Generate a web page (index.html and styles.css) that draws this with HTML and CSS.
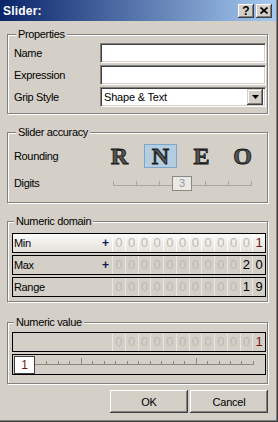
FILE: index.html
```html
<!DOCTYPE html>
<html>
<head>
<meta charset="utf-8">
<link rel="stylesheet" href="styles.css">
</head>
<body>
<div class="window">
  <div class="titlebar">
    <span class="title">Slider:</span>
    <div class="tb-buttons">
      <div class="tb-btn help">?</div>
      <div class="tb-btn close"><svg width="8" height="7" viewBox="0 0 8 7"><path d="M0.5 0.5 L7.5 6.5 M7.5 0.5 L0.5 6.5" stroke="#000" stroke-width="1.7" fill="none"/></svg></div>
    </div>
  </div>
  <div class="content">
    <fieldset class="group g-props">
      <legend>Properties</legend>
      <div class="frow"><span class="lbl">Name</span><div class="input"></div></div>
      <div class="frow"><span class="lbl">Expression</span><div class="input"></div></div>
      <div class="frow"><span class="lbl">Grip Style</span><div class="input combo"><span class="combo-text">Shape &amp; Text</span><span class="combo-btn"><svg width="7" height="4" viewBox="0 0 7 4"><path d="M0 0 H7 L3.5 4 Z" fill="#000"/></svg></span></div></div>
    </fieldset>

    <fieldset class="group g-acc">
      <legend>Slider accuracy</legend>
      <div class="arow">
        <span class="lbl lbl-round">Rounding</span>
        <div class="letters">
          <span class="letter">R</span>
          <span class="letter"><span class="sel">N</span></span>
          <span class="letter">E</span>
          <span class="letter">O</span>
        </div>
      </div>
      <div class="arow drow">
        <span class="lbl lbl-digits">Digits</span>
        <div class="track">
          <div class="ticks"><i></i><i></i><i></i><i></i><i></i><i></i><i></i></div>
          <span class="thumb3">3</span>
        </div>
      </div>
    </fieldset>

    <fieldset class="group g-dom">
      <legend>Numeric domain</legend>
      <div class="nrow active">
        <span class="nlbl">Min</span><span class="sign">+</span>
        <div class="digits"><span>0</span><span>0</span><span>0</span><span>0</span><span>0</span><span>0</span><span>0</span><span>0</span><span>0</span><span>0</span><span>0</span><span class="red">1</span></div>
      </div>
      <div class="nrow">
        <span class="nlbl">Max</span><span class="sign">+</span>
        <div class="digits"><span>0</span><span>0</span><span>0</span><span>0</span><span>0</span><span>0</span><span>0</span><span>0</span><span>0</span><span>0</span><span class="blk">2</span><span class="blk">0</span></div>
      </div>
      <div class="nrow">
        <span class="nlbl">Range</span>
        <div class="digits"><span>0</span><span>0</span><span>0</span><span>0</span><span>0</span><span>0</span><span>0</span><span>0</span><span>0</span><span>0</span><span class="blk">1</span><span class="blk">9</span></div>
      </div>
    </fieldset>

    <fieldset class="group g-val">
      <legend>Numeric value</legend>
      <div class="nrow">
        <span class="nlbl"></span>
        <div class="digits"><span>0</span><span>0</span><span>0</span><span>0</span><span>0</span><span>0</span><span>0</span><span>0</span><span>0</span><span>0</span><span>0</span><span class="red">1</span></div>
      </div>
      <div class="vslider">
        <span class="thumb1">1</span>
        <div class="vticks"><i></i><i></i><i></i><i></i><i class="tall"></i><i></i><i></i><i></i><i></i><i></i><i></i><i></i><i></i><i></i><i class="tall"></i><i></i><i></i><i></i><i></i><i></i></div>
      </div>
    </fieldset>

    <div class="dlg-buttons">
      <div class="btn">OK</div>
      <div class="btn">Cancel</div>
    </div>
  </div>
</div>
</body>
</html>
```

FILE: styles.css
```css
* { box-sizing: border-box; }
html, body { margin: 0; padding: 0; }
body {
  width: 278px;
  height: 422px;
  overflow: hidden;
  background: #d4d0c8;
  font-family: "Liberation Sans", Arial, sans-serif;
  font-size: 11px;
  color: #000;
}
.window {
  width: 278px;
  height: 422px;
  padding: 0 2px 2px 0;
  box-shadow: inset -1px -1px 0 #404040, inset -2px -2px 0 #808080;
  display: flex;
  flex-direction: column;
}
.titlebar {
  height: 21px;
  flex: none;
  background: linear-gradient(to right, #0a246a, #a6caf0);
  display: flex;
  align-items: center;
  justify-content: space-between;
  padding: 0 4px 0 3px;
}
.title {
  color: #fff;
  font-weight: bold;
  font-size: 12px;
  letter-spacing: 0.2px;
}
.tb-buttons { display: flex; gap: 2px; }
.tb-btn {
  width: 16px;
  height: 14px;
  background: #d4d0c8;
  box-shadow: inset -1px -1px 0 #404040, inset 1px 1px 0 #fff, inset -2px -2px 0 #808080;
  display: flex;
  align-items: center;
  justify-content: center;
  font-weight: bold;
  font-size: 12px;
  line-height: 14px;
}
.content {
  padding: 0 8px 0 7px;
  display: flex;
  flex-direction: column;
}
.group {
  margin: 0;
  min-width: 0;
  border: 1px solid #808080;
  box-shadow: inset 1px 1px 0 #fff, 1px 1px 0 #fff;
}
.group legend {
  height: 13px;
  line-height: 13px;
  padding: 0 2px;
  margin-left: 2px;
  background: #d4d0c8;
  letter-spacing: -0.35px;
}
.lbl { letter-spacing: -0.35px; }

/* Properties */
.g-props {
  margin-top: 7px;
  padding: 2px 1px 6px 6px;
  display: flex;
  flex-direction: column;
  gap: 2px;
}
.frow { display: flex; align-items: center; height: 20px; }
.frow .lbl { width: 86px; flex: none; }
.input {
  flex: 1;
  height: 20px;
  background: #fff;
  border: 1px solid;
  border-color: #808080 #fff #fff #808080;
  box-shadow: inset 1px 1px 0 #404040, inset -1px -1px 0 #d4d0c8;
}
.combo { display: flex; align-items: center; padding: 2px 2px 2px 3px; }
.combo-text { flex: 1; letter-spacing: -0.2px; }
.combo-btn {
  width: 16px;
  height: 16px;
  background: #d4d0c8;
  box-shadow: inset -1px -1px 0 #404040, inset 1px 1px 0 #d4d0c8, inset -2px -2px 0 #808080, inset 2px 2px 0 #fff;
  display: flex;
  align-items: center;
  justify-content: center;
}

/* Slider accuracy */
.g-acc {
  margin-top: 12px;
  padding: 5px 1px 8px 6px;
  display: flex;
  flex-direction: column;
  gap: 4px;
}
.arow { display: flex; align-items: center; height: 24px; }
.drow { height: 22px; }
.lbl-round { width: 85px; flex: none; }
.lbl-digits { width: 99px; flex: none; }
.letters { display: flex; }
.letter {
  width: 41px;
  height: 24px;
  display: flex;
  align-items: center;
  justify-content: center;
  font-family: "Liberation Serif", "Times New Roman", serif;
  font-weight: bold;
  font-size: 24px;
  line-height: 24px;
  color: #555;
  -webkit-text-stroke: 0.8px #111;
}
.sel {
  width: 33px;
  height: 24px;
  display: flex;
  align-items: center;
  justify-content: center;
  background: #b4cde1;
  border: 1px solid #7ea6c8;
}
.track {
  position: relative;
  width: 139px;
  height: 22px;
  display: flex;
  align-items: center;
}
.ticks {
  flex: 1;
  height: 5px;
  margin-top: 1px;
  display: flex;
  justify-content: space-between;
  border-bottom: 1px solid #aaa79f;
}
.ticks i { width: 1px; background: #aaa79f; }
.thumb3 {
  position: absolute;
  left: 59px;
  top: 4px;
  width: 20px;
  height: 15px;
  background: #ebe9e4;
  border: 1px solid #8a8882;
  color: #8b97a6;
  text-align: center;
  line-height: 13px;
  font-size: 11px;
}

/* Numeric rows */
.g-dom {
  margin-top: 12px;
  padding: 5px 1px 4px 4px;
  display: flex;
  flex-direction: column;
  gap: 2px;
}
.g-val {
  margin-top: 14px;
  padding: 3px 1px 8px 4px;
  display: flex;
  flex-direction: column;
  gap: 2px;
}
.nrow {
  height: 20px;
  border: 1px solid #000;
  display: flex;
  align-items: center;
  padding-left: 1px;
  background: #d4d0c8;
}
.nrow.active { background: linear-gradient(to bottom, #fbfbfa, #e2e0da); }
.nlbl { flex: 1; letter-spacing: -0.35px; font-size: 11px; }
.sign {
  color: #0a1a5c;
  font-weight: bold;
  font-size: 12px;
  margin-right: 3px;
}
.digits {
  width: 153px;
  height: 18px;
  display: grid;
  grid-template-columns: repeat(12, 1fr);
}
.digits span {
  border-left: 1px solid #e8e6e0;
  text-align: center;
  font-size: 13px;
  line-height: 18px;
  color: #bdb9b1;
}
.active .digits span { border-left-color: #fcfcfb; }
.digits span.red { color: #7c1414; }
.digits span.blk { color: #000; }

.vslider {
  height: 21px;
  border: 1px solid #000;
  display: flex;
  align-items: flex-start;
  padding: 0 11px 0 1px;
}
.thumb1 {
  width: 21px;
  height: 18px;
  margin-top: 1px;
  background: #fff;
  border: 1px solid #404040;
  color: #7c1414;
  text-align: center;
  font-size: 12px;
  line-height: 16px;
}
.vticks {
  flex: 1;
  height: 7px;
  margin-top: 3px;
  display: flex;
  justify-content: space-between;
  align-items: flex-end;
  border-bottom: 1px solid #8a8882;
}
.vticks i { width: 1px; height: 3px; background: #8a8882; }
.vticks i:first-child { visibility: hidden; }
.vticks i.tall { height: 6px; }

/* Buttons */
.dlg-buttons {
  margin-top: 6px;
  display: flex;
  justify-content: flex-end;
  gap: 2px;
}
.btn {
  width: 78px;
  height: 23px;
  background: #d4d0c8;
  box-shadow: inset -1px -1px 0 #404040, inset 1px 1px 0 #fff, inset -2px -2px 0 #808080;
  display: flex;
  align-items: center;
  justify-content: center;
  font-size: 11px;
  letter-spacing: -0.2px;
}
```
